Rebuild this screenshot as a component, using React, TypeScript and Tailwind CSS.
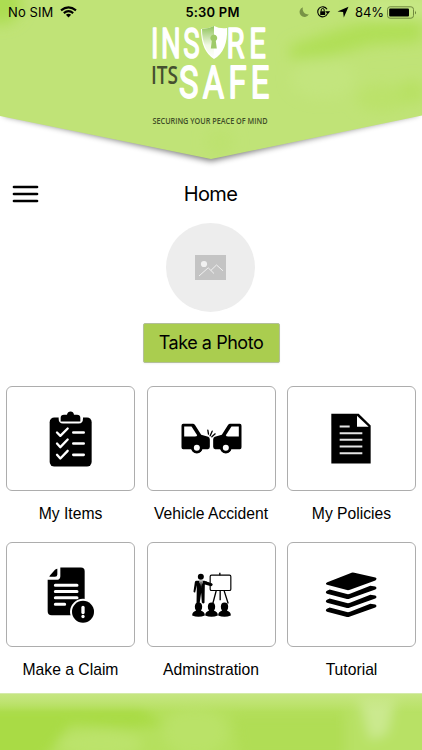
import React from 'react';

const StatusBar: React.FC = () => (
  <div className="relative flex h-6 items-center justify-between pl-2 pr-[5px] font-['Inter',sans-serif] text-[13px] leading-6 text-black">
    <div className="flex items-center gap-[7px]">
      <span className="tracking-[0.1px]">No SIM</span>
      <svg width="17" height="12" viewBox="0 0 17 12" fill="none" stroke="currentColor" strokeWidth="2.1">
        <path d="M1 4.4Q8.5 -1.8 16 4.4" />
        <path d="M3.8 7.1Q8.5 3.3 13.2 7.1" />
        <path d="M8.5 11.6L5.9 8.8Q8.5 6.9 11.1 8.8Z" fill="currentColor" stroke="none" />
      </svg>
    </div>
    <div className="absolute inset-x-0 pl-[3px] text-center font-semibold tracking-[0.2px]">5:30 PM</div>
    <div className="flex items-center">
      <svg width="50" height="14" viewBox="0 0 50 14" className="mr-[6px]" fill="none">
        <path d="M4 2.2A5 5 0 1 0 10 9.3A5.4 5.4 0 0 1 4 2.2Z" fill="#789346" />
        <path d="M28 4.2A5 5 0 1 0 28.4 8.6" stroke="#000" strokeWidth="1.1" />
        <path d="M26.2 6.2h5l-2.5 3Z" fill="#000" />
        <rect x="21.2" y="6.2" width="5" height="3.8" rx=".5" fill="#000" />
        <path d="M22.2 6.5V5a1.5 1.5 0 0 1 3 0v1.5" stroke="#000" strokeWidth="1" />
        <path d="M49.5 1.8L44.8 12.4L44.1 7.1L38.5 6.5Z" fill="#000" />
      </svg>
      <span className="mr-[3px] tracking-[-0.1px]">84%</span>
      <svg width="30" height="13" viewBox="0 0 30 13">
        <rect x=".5" y=".8" width="26" height="11.4" rx="2.6" fill="none" stroke="#70883e" />
        <rect x="2.2" y="2.5" width="19.8" height="8" rx="1" />
        <path d="M28 4.5q1.6 2 0 4Z" fill="#59702c" />
      </svg>
    </div>
  </div>
);

const Logo: React.FC = () => (
  <svg width="124" height="108" viewBox="148 22 124 108" className="overflow-visible">
    <defs>
      <linearGradient id="shield" x1="0" y1="0" x2="0" y2="1">
        <stop offset="0" stopColor="#8fc35a" />
        <stop offset=".6" stopColor="#f1f9e4" />
        <stop offset="1" stopColor="#fff" />
      </linearGradient>
    </defs>
    <g fill="#fff" stroke="#fff" strokeWidth="1.7" strokeLinejoin="round" fontFamily="Roboto, sans-serif" fontSize="43">
      <text transform="translate(151 58.4) scale(.64 1)" textLength="76" lengthAdjust="spacing">INS</text>
      <text transform="translate(226.5 58.4) scale(.68 1)" textLength="58" lengthAdjust="spacing">RE</text>
      <text transform="translate(179 98.4) scale(.76 1.04)" textLength="119" lengthAdjust="spacing">SAFE</text>
    </g>
    <path d="M201 29Q208 29 214 26Q220 29 227 28Q228 51 214 59Q201 51 201 29Z" fill="#fff" />
    <path d="M202 29Q208 29 214 26V58Q202 49 202 29Z" fill="url(#shield)" />
    <path d="M213.8 34.5a3.6 3.6 0 0 1 2 6.5l1 7.5h-6l1-7.5a3.6 3.6 0 0 1 2-6.5Z" fill="#9fca69" />
    <g fontFamily="'Open Sans', sans-serif">
      <text x="151" y="84" fontSize="25" fontWeight="600" fill="#45502f" textLength="27" lengthAdjust="spacingAndGlyphs">ITS</text>
      <text x="152.5" y="124" fontSize="9.5" fontWeight="600" fill="#404f28" textLength="115" lengthAdjust="spacingAndGlyphs">
        SECURING YOUR PEACE OF MIND
      </text>
    </g>
  </svg>
);

const Header: React.FC = () => (
  <header className="relative h-[171px] shrink-0">
    <svg className="absolute inset-0" width="422" height="171" viewBox="0 0 422 171">
      <defs>
        <filter id="haze" x="-50%" y="-50%" width="200%" height="200%">
          <feGaussianBlur stdDeviation="7" />
        </filter>
        <filter id="shadow" x="-5%" y="-5%" width="110%" height="120%">
          <feGaussianBlur stdDeviation="3" />
        </filter>
        <clipPath id="banner">
          <path d="M0 0H422V115.5L211 159L0 116Z" />
        </clipPath>
      </defs>
      <path d="M4 90H418V114L211 161L4 115Z" fill="#000" opacity=".55" filter="url(#shadow)" />
      <g clipPath="url(#banner)">
        <rect width="422" height="171" fill="#c0e377" />
        <g filter="url(#haze)">
          <ellipse cx="0" cy="4" rx="22" ry="20" fill="#acdd51" />
          <path d="M290 46L330 32L365 22L422 20V42L370 45L325 58L290 59Z" fill="#b0df57" />
          <ellipse cx="382" cy="98" rx="26" ry="14" fill="#bbe26b" />
          <ellipse cx="412" cy="92" rx="14" ry="12" fill="#b8e164" />
          <ellipse cx="398" cy="8" rx="45" ry="8" fill="#c9e989" />
          <ellipse cx="323" cy="78" rx="32" ry="20" fill="#c3e57e" />
          <ellipse cx="220" cy="142" rx="14" ry="14" fill="#bde270" />
        </g>
      </g>
    </svg>
    <StatusBar />
    <div className="relative -mt-0.5 flex justify-center pr-0.5">
      <Logo />
    </div>
  </header>
);

const ItemsIcon: React.FC = () => (
  <svg viewBox="21 20 381 306" className="h-full w-full">
    <rect x="149" y="110" width="126" height="147" rx="14" />
    <path d="M176 105H249V114Q249 128 236 128H189Q176 128 176 114Z" fill="#fff" />
    <path d="M182 122V111Q182 102 192 102H201Q203 92 212 92Q220 92 222 102H231Q241 102 241 111V122Z" />
    <g fill="none" stroke="#fff" strokeWidth="7" strokeLinecap="round" strokeLinejoin="round">
      <path d="M171 155L181 165L203 143M171 188L181 199L203 176M171 222L181 233L203 210" />
      <path d="M220 155H251M220 188H251M220 222H251" strokeWidth="8" />
    </g>
  </svg>
);

const AccidentIcon: React.FC = () => (
  <svg viewBox="22.5 20 381 306" className="h-full w-full">
    <path d="M128 129H157Q161 129 164 133L182 162L203 168Q208 170 208 176V198Q208 205 202 205H185A17 17 0 0 1 153 205H128Q123 205 123 199V135Q123 129 128 129Z" />
    <path d="M131 137H153L170 163Q169 167 163 167H131Z" fill="#fff" />
    <circle cx="169" cy="201" r="17" />
    <circle cx="169" cy="201" r="9" fill="#fff" />
    <path d="M298 129H269Q265 129 262 133L244 162L223 168Q218 170 218 176V198Q218 205 224 205H240A17 17 0 0 0 272 205H298Q303 205 303 199V135Q303 129 298 129Z" />
    <path d="M295 137H273L256 163Q257 167 263 167H295Z" fill="#fff" />
    <circle cx="256" cy="201" r="17" />
    <circle cx="256" cy="201" r="9" fill="#fff" />
    <path d="M202 148L204 160M215 151L209 165M224 159L214 168" stroke="#000" strokeWidth="4" strokeLinecap="round" />
  </svg>
);

const PoliciesIcon: React.FC = () => (
  <svg viewBox="25 20 381 306" className="h-full w-full">
    <path d="M155 99H237L273 134V248H155Z" />
    <path d="M232 105L267 138H232Z" fill="#fff" />
    <path d="M180 137H210M180 157H248M180 177H248M180 197H248M180 217H248" stroke="#e5e5e5" strokeWidth="6" />
  </svg>
);

const ClaimIcon: React.FC = () => (
  <svg viewBox="21 22 381 306" className="h-full w-full">
    <path d="M181 94H243Q254 94 254 105V237H155Q143 237 143 225V131H169Q181 131 181 120Z" />
    <path d="M148 122Q149 118 153 114L165 101Q169 98 172 98V115Q172 122 165 122Z" />
    <path d="M166 147H231M166 166H231M166 185H231M166 204H194" stroke="#fff" strokeWidth="9" strokeLinecap="round" />
    <circle cx="249" cy="227" r="39" fill="#fff" />
    <circle cx="249" cy="227" r="33" />
    <path d="M249 214V229" stroke="#fff" strokeWidth="10" strokeLinecap="round" />
    <circle cx="249" cy="241" r="5" fill="#fff" />
  </svg>
);

const AdministrationIcon: React.FC = () => (
  <svg viewBox="22.5 22 381 306" className="h-full w-full">
    <circle cx="181" cy="122" r="9" />
    <path d="M168 134H192L215 143Q218 148 212 150L193 145L192 200Q188 204 184 199L182 170L177 204H168L169 147L164 169Q160 170 159 166L163 138Q164 134 168 134Z" />
    <path d="M176 135H187L182 154Z" fill="#fff" />
    <path d="M180 137H183L184 152L181 157L179 152Z" />
    <rect x="209" y="117" width="62" height="46" rx="4" fill="none" stroke="#000" strokeWidth="3.5" />
    <path d="M196 139L213 145" stroke="#000" strokeWidth="6" strokeLinecap="round" />
    <path d="M238 110V117M227 164L217 202M239 164V192M251 164L263 202" fill="none" stroke="#000" strokeWidth="4" />
    {[174, 213, 252].map((x) => (
      <g key={x} transform={`translate(${x} 0)`}>
        <ellipse cx="0" cy="212" rx="11" ry="13" />
        <path d="M-7 218L-8 224Q-19 227 -19 238Q0 246 19 238Q19 227 8 224L7 218Z" />
      </g>
    ))}
  </svg>
);

const TutorialIcon: React.FC = () => (
  <svg viewBox="25 22 381 306" className="h-full w-full">
    <path d="M143 138L212 111Q218 108 224 110L287 124Q294 127 287 133L211 161Q205 163 199 161L142 146Q135 142 143 138Z" />
    {[0, 27, 54].map((y) => (
      <path
        key={y}
        transform={`translate(0 ${y})`}
        d="M150 160L199 173Q205 175 211 173L272 149L287 151Q294 155 287 160L211 187Q205 190 199 188L142 173Q135 168 142 164Z"
      />
    ))}
  </svg>
);

const tiles = [
  { label: 'My Items', Icon: ItemsIcon },
  { label: 'Vehicle Accident', Icon: AccidentIcon },
  { label: 'My Policies', Icon: PoliciesIcon },
  { label: 'Make a Claim', Icon: ClaimIcon },
  { label: 'Adminstration', Icon: AdministrationIcon },
  { label: 'Tutorial', Icon: TutorialIcon },
];

const Footer: React.FC = () => (
  <footer className="h-[57px] overflow-hidden border-t border-[#d5eba9] bg-[#b5e05e]">
    <svg width="422" height="56" viewBox="0 0 422 56">
      <defs>
        <filter id="cloud" x="-50%" y="-50%" width="200%" height="200%">
          <feGaussianBlur stdDeviation="6" />
        </filter>
        <linearGradient id="fade" x1="0" y1="0" x2="0" y2="1">
          <stop offset="0" stopColor="#c6e682" />
          <stop offset="1" stopColor="#c6e682" stopOpacity="0" />
        </linearGradient>
      </defs>
      <g filter="url(#cloud)">
        <path d="M-20 14H140L165 30L130 34L70 30L40 70H-20Z" fill="#a9db45" />
        <ellipse cx="100" cy="50" rx="42" ry="13" fill="#bce36c" />
        <ellipse cx="195" cy="38" rx="32" ry="24" fill="#bae268" />
        <path d="M232 20H345V66H240Z" fill="#b0dd54" />
        <path d="M345 10H440V70H345Z" fill="#b8e165" />
        <path d="M357 -5H397L387 40L370 46Z" fill="#cbe98f" />
      </g>
      <rect width="422" height="18" fill="url(#fade)" />
    </svg>
  </footer>
);

const App: React.FC = () => {
  return (
    <div className="flex h-[750px] w-[422px] flex-col overflow-hidden bg-white text-black">
      <Header />

      {/* Title row */}
      <div className="grid h-[46px] shrink-0 grid-cols-[1fr_auto_1fr] items-center px-3 font-['Inter',sans-serif]">
        <button aria-label="Menu" className="w-7">
          <svg width="28" height="20" viewBox="0 0 28 20" stroke="#000" strokeWidth="2.7" strokeLinecap="round">
            <path d="M2 3H25M2 10H25M2 17H25" />
          </svg>
        </button>
        <h1 className="pr-px text-[20px] leading-6 tracking-[-0.6px]">Home</h1>
      </div>

      {/* Profile photo */}
      <div className="flex shrink-0 flex-col items-center pt-1.5 pr-px">
        <div className="flex h-[89px] w-[89px] items-center justify-center rounded-full bg-[#ededed]">
          <svg width="31" height="25" viewBox="0 0 31 25" fill="none">
            <rect width="31" height="25" fill="#c4c4c4" />
            <circle cx="9" cy="9" r="3.1" fill="#f1f1f1" />
            <path d="M4 21L13.2 12.8L19 18.5M15.8 15.5L21.5 10L28 15.8" stroke="#f1f1f1" strokeWidth="1" />
          </svg>
        </div>
        <button className="ml-px mt-[11px] h-10 w-[137px] rounded-[2px] border border-[#b3bf99] bg-[#aacd4f] font-['Inter',sans-serif] text-[18px] leading-6 tracking-[-0.45px] shadow-xs">
          Take a Photo
        </button>
      </div>

      {/* Menu tiles */}
      <div className="mt-[23px] grid grid-cols-[129px_129px_129px] justify-between gap-y-[15.5px] px-1.5 font-['Liberation_Sans',Arial,sans-serif]">
        {tiles.map(({ label, Icon }) => (
          <div key={label} className="flex h-[140px] flex-col items-center">
            <div className="h-[105px] w-full rounded-md border border-[#adadad]">
              <Icon />
            </div>
            <span className="mt-[11px] whitespace-nowrap text-[15.7px] leading-6">{label}</span>
          </div>
        ))}
      </div>

      <div className="mt-auto">
        <Footer />
      </div>
    </div>
  );
};

export default App;
